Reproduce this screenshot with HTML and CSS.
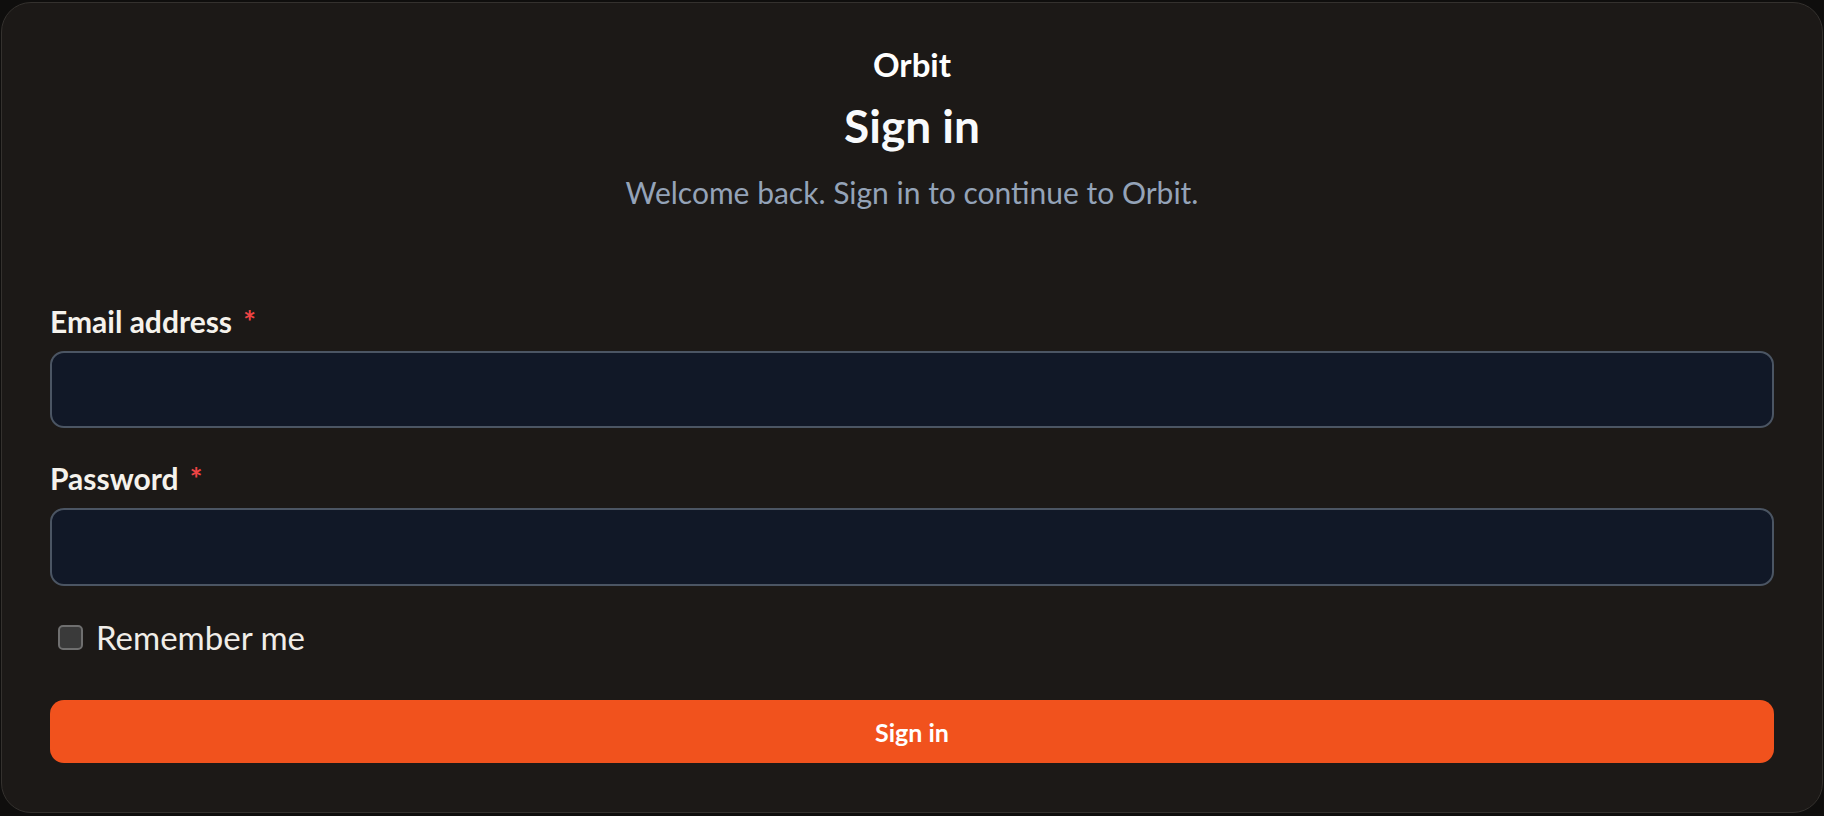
FILE: index.html
```html
<!DOCTYPE html>
<html lang="en">
<head>
<meta charset="utf-8">
<title>Sign in – Orbit</title>
<link rel="stylesheet" href="styles.css">
</head>
<body>
<div class="page">
  <main class="card">
    <header class="header">
      <div class="brand">Orbit</div>
      <h1 class="title">Sign in</h1>
      <p class="subtitle">Welcome back. Sign in to continue to Orbit.</p>
    </header>
    <form class="form">
      <div class="field">
        <label class="label" for="email">Email address <span class="req">*</span></label>
        <input class="input" id="email" type="email">
      </div>
      <div class="field field-password">
        <label class="label" for="password">Password <span class="req">*</span></label>
        <input class="input input-tall" id="password" type="password">
      </div>
      <label class="remember">
        <input class="checkbox" type="checkbox">
        <span>Remember me</span>
      </label>
      <button class="submit" type="button">Sign in</button>
    </form>
  </main>
</div>
</body>
</html>
```

FILE: styles.css
```css
* { box-sizing: border-box; }

html, body {
  margin: 0;
  background: #0f0e0d;
  font-family: "Lato", "Liberation Sans", sans-serif;
}

.page {
  padding: 2px 1px 2px 1px;
}

.card {
  background: #1c1917;
  border: 1px solid #34312e;
  border-radius: 30px;
  padding: 41px 48px 49px 48px;
}

.header {
  display: flex;
  flex-direction: column;
  align-items: center;
  text-align: center;
}

.brand {
  font-size: 33px;
  line-height: 40px;
  font-weight: 700;
  color: #ffffff;
}

.title {
  margin: 16px 0 0 0;
  font-size: 46px;
  line-height: 52px;
  font-weight: 700;
  color: #f8fafc;
}

.subtitle {
  margin: 20px 0 0 0;
  font-size: 30px;
  line-height: 40px;
  font-weight: 400;
  color: #94a3b8;
}

.form {
  margin-top: 91px;
  display: flex;
  flex-direction: column;
}

.field {
  display: flex;
  flex-direction: column;
  gap: 12px;
}

.field-password {
  margin-top: 32px;
}

.label {
  font-size: 30px;
  line-height: 36px;
  font-weight: 700;
  color: #f5f2ec;
}

.req {
  color: #ef4444;
  margin-left: 4px;
}

.input {
  appearance: none;
  display: block;
  width: 100%;
  height: 77px;
  margin: 0;
  background: #111827;
  border: 2px solid #4b5563;
  border-radius: 14px;
  color: #f8fafc;
  font: inherit;
  font-size: 24px;
  padding: 0 18px;
  outline: none;
}

.input-tall {
  height: 78px;
}

.remember {
  margin-top: 31px;
  display: flex;
  align-items: center;
  gap: 13px;
  padding-left: 8px;
  height: 40px;
  font-size: 33px;
  line-height: 40px;
  color: #f0ede8;
}

.checkbox {
  appearance: none;
  margin: 0;
  width: 25px;
  height: 25px;
  border: 2px solid #6f6f6f;
  border-radius: 5px;
  background: #3a3a3a;
  flex: none;
}

.submit {
  margin-top: 43px;
  height: 63px;
  width: 100%;
  border: none;
  border-radius: 14px;
  background: #f1521d;
  color: #ffffff;
  font-family: inherit;
  font-size: 25px;
  font-weight: 700;
  cursor: pointer;
}
```
